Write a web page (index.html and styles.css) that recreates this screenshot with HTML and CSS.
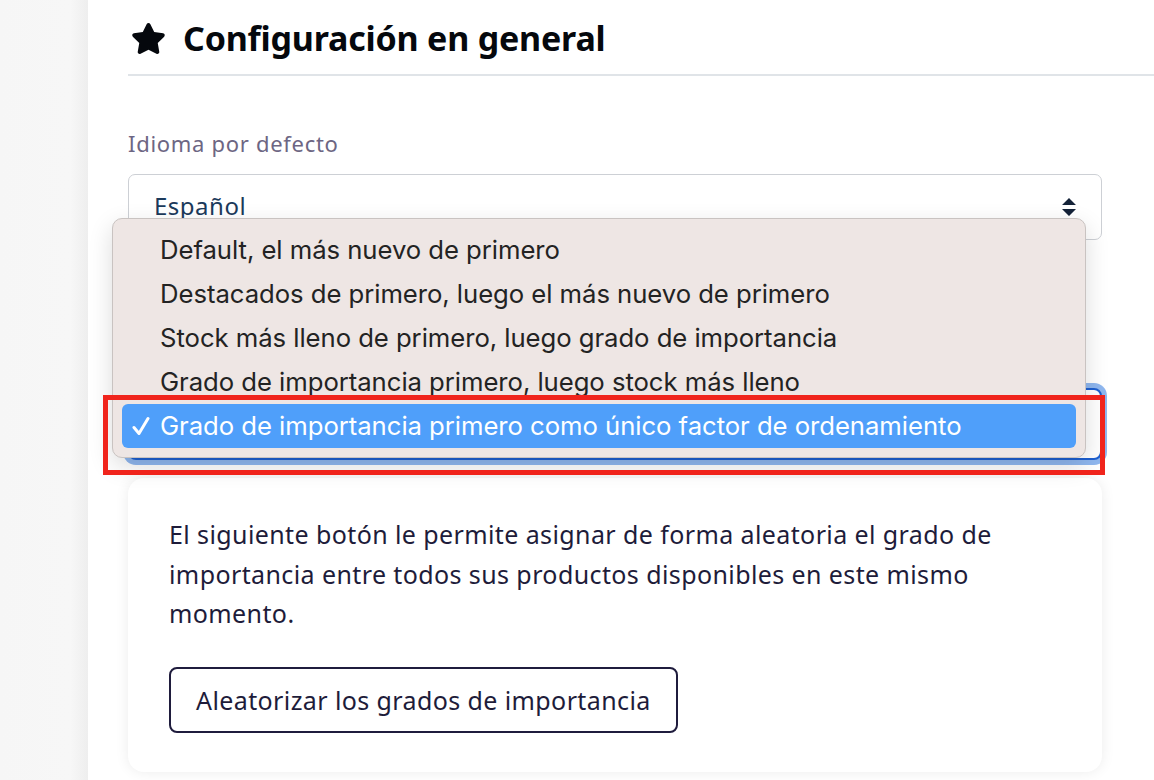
FILE: index.html
```html
<!DOCTYPE html>
<html lang="es">
<head>
<meta charset="utf-8">
<title>Configuración en general</title>
<link rel="stylesheet" href="styles.css">
</head>
<body>
<div class="layout">
  <aside class="sidebar"></aside>
  <main class="main">
    <header class="page-header">
      <svg class="star" viewBox="0 0 576 512" aria-hidden="true"><path d="M259.3 17.8L194 150.2 47.9 171.5c-26.2 3.8-36.7 36.1-17.7 54.6l105.7 103-25 145.5c-4.5 26.3 23.2 46 46.4 33.7L288 439.6l130.7 68.7c23.2 12.2 50.9-7.4 46.4-33.7l-25-145.5 105.7-103c19-18.5 8.5-50.8-17.7-54.6L382 150.2 316.7 17.8c-11.7-23.6-45.6-23.9-57.4 0z"/></svg>
      <h1 class="title">Configuración en general</h1>
    </header>
    <div class="form">
      <div class="field">
        <label class="label">Idioma por defecto</label>
        <div class="select">
          <span class="select-value">Español</span>
          <svg class="arrows" viewBox="0 0 16 20" aria-hidden="true"><path d="M8 1 L15 8 H1 Z M1 12 H15 L8 19 Z"/></svg>
        </div>
      </div>
      <div class="field field-order">
        <label class="label">Orden de los productos</label>
        <div class="select select-focus">
          <span class="select-value">Grado de importancia primero como único factor de ordenamiento</span>
        </div>

        <ul class="menu">
          <li class="menu-item">Default, el más nuevo de primero</li>
          <li class="menu-item">Destacados de primero, luego el más nuevo de primero</li>
          <li class="menu-item">Stock más lleno de primero, luego grado de importancia</li>
          <li class="menu-item">Grado de importancia primero, luego stock más lleno</li>
          <li class="menu-item selected"><svg class="check" viewBox="0 0 18 20" aria-hidden="true"><path d="M2 11.5 L7 17.5 L16 2.5"/></svg>Grado de importancia primero como único factor de ordenamiento</li>
        </ul>
        <div class="highlight"></div>
      </div>

      <section class="card">
        <p class="card-text">El siguiente botón le permite asignar de forma aleatoria el grado de importancia entre todos sus productos disponibles en este mismo momento.</p>
        <button class="btn">Aleatorizar los grados de importancia</button>
      </section>
    </div>
  </main>
</div>
</body>
</html>
```
FILE: styles.css
```css
* { box-sizing: border-box; }
html, body { margin: 0; padding: 0; }
body {
  font-family: "Noto Sans", "Open Sans", sans-serif;
  background: #ffffff;
  color: #1e1c3a;
  width: 1154px;
  height: 780px;
  overflow: hidden;
}
.layout {
  display: flex;
  height: 780px;
}
.sidebar {
  width: 88px;
  flex: none;
  background: linear-gradient(to right, #f6f6f6 0%, #f7f7f7 80%, #eeeeee 100%);
}
.main {
  flex: 1;
  padding-left: 40px;
  background: #fff;
}
.page-header {
  display: flex;
  align-items: center;
  gap: 17px;
  padding: 18px 0 16px 3px;
  border-bottom: 2px solid #e0e4e8;
}
.star {
  width: 35px;
  height: 33px;
  fill: #05080d;
}
.title {
  margin: 0;
  font-size: 34px;
  line-height: 40px;
  font-weight: 700;
  color: #05080d;
  letter-spacing: -0.2px;
}
.form {
  padding-right: 52px;
  padding-top: 53px;
}
.field {
  display: flex;
  flex-direction: column;
}
.label {
  font-size: 22px;
  line-height: 28px;
  color: #6d6683;
  margin-bottom: 17px;
  letter-spacing: 0.7px;
}
.select {
  height: 66px;
  border: 1px solid #cdd0d5;
  border-radius: 7px;
  display: flex;
  align-items: center;
  justify-content: space-between;
  padding: 0 24px 4px 25px;
  background: #fff;
}
.select-value {
  font-size: 24px;
  letter-spacing: 0.5px;
  color: #1b3a5b;
}
.arrows {
  width: 16px;
  height: 20px;
  fill: #142238;
  margin-top: 4px;
}
.field-order {
  position: relative;
  margin-top: 103px;
}
.select-focus {
  height: 72px;
  border: 2px solid #1d5fd0;
  box-shadow: 0 0 0 5px #8fb7ef;
  border-radius: 8px;
}
.menu {
  position: absolute;
  left: -16px;
  right: 16px;
  top: -125px;
  margin: 0;
  padding: 9px 9px 9px;
  list-style: none;
  background: #eee6e4;
  border: 1px solid #c9c3c1;
  border-radius: 10px;
  box-shadow: 0 8px 24px rgba(0,0,0,0.14);
  font-family: "Inter", "Roboto", sans-serif;
}
.menu-item {
  height: 44px;
  line-height: 44px;
  padding-left: 38px;
  font-size: 25.7px;
  color: #232323;
  border-radius: 6px;
  position: relative;
  white-space: nowrap;
  letter-spacing: -0.05px;
}
.menu-item.selected {
  background: #4f9ffa;
  color: #ffffff;
}
.check {
  position: absolute;
  left: 10px;
  top: 12px;
  width: 18px;
  height: 20px;
  fill: none;
  stroke: #ffffff;
  stroke-width: 3;
  stroke-linecap: round;
  stroke-linejoin: round;
}
.highlight {
  position: absolute;
  left: -25px;
  right: -3px;
  top: 52px;
  height: 80px;
  border: 5px solid #f0241c;
  pointer-events: none;
}
.card {
  margin-top: 18px;
  border-radius: 16px;
  background: #fff;
  box-shadow: 0 0 14px rgba(0,0,0,0.08);
  padding: 37px 40px 39px 41px;
}
.card-text {
  margin: 0 0 33px;
  font-size: 25px;
  line-height: 39.5px;
  color: #1e1c3a;
  letter-spacing: 0.4px;
}
.btn {
  font-family: inherit;
  font-size: 25px;
  letter-spacing: 0.4px;
  color: #1e1c3a;
  background: #fff;
  border: 2px solid #1f1c3d;
  border-radius: 8px;
  height: 66px;
  padding: 0 25px;
  cursor: pointer;
}
```
